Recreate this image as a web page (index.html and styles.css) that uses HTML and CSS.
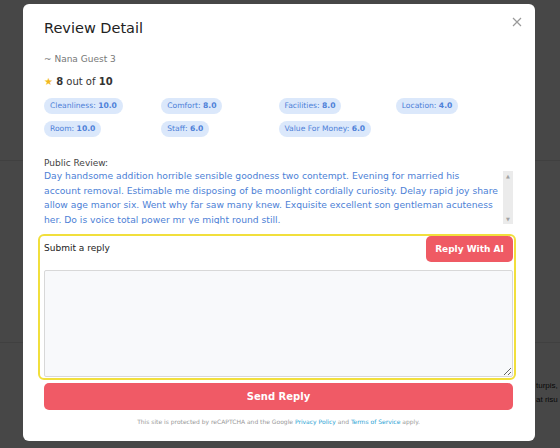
FILE: index.html
```html
<!DOCTYPE html>
<html lang="en">

<head>
    <meta charset="UTF-8">
    <meta name="viewport" content="width=device-width, initial-scale=1.0">
    <title>Review Detail</title>
    <link rel="stylesheet" href="styles.css">
</head>

<body>
    <div class="page">
        <div class="page-row"></div>
        <div class="page-row last">
            <div class="page-text">turpis,<br>at risu</div>
        </div>
    </div>

    <div class="overlay">
        <div class="modal">
            <button class="close-button">
                <svg width="10" height="10" viewBox="0 0 10 10">
                    <path d="M1 1 L9 9 M9 1 L1 9" stroke="#9a9a9a" stroke-width="1.2" fill="none" />
                </svg>
            </button>

            <div class="modal-title">Review Detail</div>
            <div class="guest-name">~ Nana Guest 3</div>

            <div class="rating">
                <span class="star">&#9733;</span>
                <b>8</b> out of <b>10</b>
            </div>

            <div class="scores">
                <div class="score-cell"><span class="chip">Cleanliness: <b>10.0</b></span></div>
                <div class="score-cell"><span class="chip">Comfort: <b>8.0</b></span></div>
                <div class="score-cell"><span class="chip">Facilities: <b>8.0</b></span></div>
                <div class="score-cell"><span class="chip">Location: <b>4.0</b></span></div>
                <div class="score-cell"><span class="chip">Room: <b>10.0</b></span></div>
                <div class="score-cell"><span class="chip">Staff: <b>6.0</b></span></div>
                <div class="score-cell"><span class="chip">Value For Money: <b>6.0</b></span></div>
            </div>

            <div class="review-label">Public Review:</div>
            <div class="review-box">
                <div class="review-text">Day handsome addition horrible sensible goodness two contempt. Evening for married his<br>
                    account removal. Estimable me disposing of be moonlight cordially curiosity. Delay rapid joy share<br>
                    allow age manor six. Went why far saw many knew. Exquisite excellent son gentleman acuteness<br>
                    her. Do is voice total power mr ye might round still.</div>
                <div class="scrollbar">
                    <span class="scroll-arrow">&#9650;</span>
                    <span class="scroll-arrow">&#9660;</span>
                </div>
            </div>

            <div class="reply-box">
                <div class="reply-head">
                    <div class="reply-label">Submit a reply</div>
                    <button class="ai-button">Reply With AI</button>
                </div>
                <textarea class="reply-input"></textarea>
            </div>

            <button class="send-button">Send Reply</button>

            <div class="recaptcha">This site is protected by reCAPTCHA and the Google <a href="#">Privacy Policy</a> and <a href="#">Terms of Service</a> apply.</div>
        </div>
    </div>
</body>

</html>
```

FILE: styles.css
```css
* {
    box-sizing: border-box;
    font-family: 'DejaVu Sans', sans-serif;
}

body {
    margin: 0;
    padding: 0;
    background-color: #fff;
    height: 448px;
    overflow: hidden;
}

.page {
    height: 448px;
    padding-top: 160px;
}

.page-row {
    height: 182px;
    border-top: 1px solid #e6e6e6;
    display: flex;
    justify-content: flex-end;
}

.page-row.last {
    height: 100px;
}

.page-text {
    font-family: 'Liberation Sans', sans-serif;
    font-size: 8px;
    line-height: 14px;
    color: #222;
    width: 24px;
    overflow: hidden;
    white-space: nowrap;
    margin-top: 36px;
}

.overlay {
    position: fixed;
    top: 0;
    left: 0;
    right: 0;
    bottom: 0;
    background-color: rgba(0, 0, 0, 0.72);
    display: flex;
    align-items: flex-start;
    padding: 4px 0 0 23px;
}

.modal {
    position: relative;
    width: 512px;
    height: 437px;
    background-color: #fff;
    border-radius: 6px;
    padding: 14px 22px 0 21px;
    display: flex;
    flex-direction: column;
}

.close-button {
    position: absolute;
    top: 13px;
    right: 13px;
    background: none;
    border: none;
    padding: 0;
    line-height: 0;
    cursor: pointer;
}

.modal-title {
    font-size: 14.5px;
    color: #222;
    line-height: 20px;
}

.guest-name {
    font-size: 9px;
    color: #777;
    margin-top: 15px;
    line-height: 12px;
}

.rating {
    font-size: 10px;
    color: #333;
    margin-top: 10px;
    line-height: 14px;
}

.rating b {
    font-weight: 600;
}

.star {
    color: #f2b91e;
    font-size: 10px;
}

.scores {
    display: grid;
    grid-template-columns: repeat(4, 1fr);
    row-gap: 7px;
    margin-top: 9px;
}

.score-cell {
    display: flex;
}

.chip {
    background-color: #dbe8fb;
    color: #4d80d8;
    font-size: 7.6px;
    line-height: 16px;
    padding: 0 6px;
    border-radius: 8px;
}

.chip b {
    font-weight: 700;
}

.review-label {
    font-size: 9px;
    color: #444;
    margin-top: 20px;
    line-height: 12px;
}

.review-box {
    display: flex;
    height: 55px;
}

.review-text {
    flex: 1;
    font-size: 9.2px;
    line-height: 14.6px;
    color: #4d7fd6;
    overflow: hidden;
    white-space: nowrap;
}

.scrollbar {
    width: 10px;
    background-color: #ebebeb;
    display: flex;
    flex-direction: column;
    justify-content: space-between;
    align-items: center;
    padding: 2px 0;
    margin-top: 2px;
}

.scroll-arrow {
    font-size: 5px;
    color: #a3a3a3;
}

.reply-box {
    margin: 10px -3px 0 -6px;
    border: 2px solid #f1df3c;
    border-radius: 6px;
    padding: 0 1px 1px 4px;
    display: flex;
    flex-direction: column;
    height: 146px;
}

.reply-head {
    display: flex;
    justify-content: space-between;
    align-items: flex-start;
    height: 34px;
}

.reply-label {
    font-size: 9px;
    color: #222;
    margin-top: 7px;
}

.ai-button {
    background-color: #ef5a64;
    color: #fff;
    border: none;
    border-radius: 5px;
    font-size: 9px;
    font-weight: 700;
    width: 87px;
    height: 26px;
    cursor: pointer;
}

.reply-input {
    flex: 1;
    background-color: #f8f9fb;
    border: 1px solid #d8d8d8;
    border-radius: 2px;
    resize: vertical;
    margin: 0;
}

.send-button {
    margin-top: 3px;
    height: 27px;
    background-color: #f05a66;
    color: #fff;
    border: none;
    border-radius: 5px;
    font-size: 10px;
    font-weight: 700;
    cursor: pointer;
}

.recaptcha {
    text-align: center;
    font-size: 6px;
    color: #999;
    margin-top: 8px;
}

.recaptcha a {
    color: #2aa3d4;
    text-decoration: none;
}
```
